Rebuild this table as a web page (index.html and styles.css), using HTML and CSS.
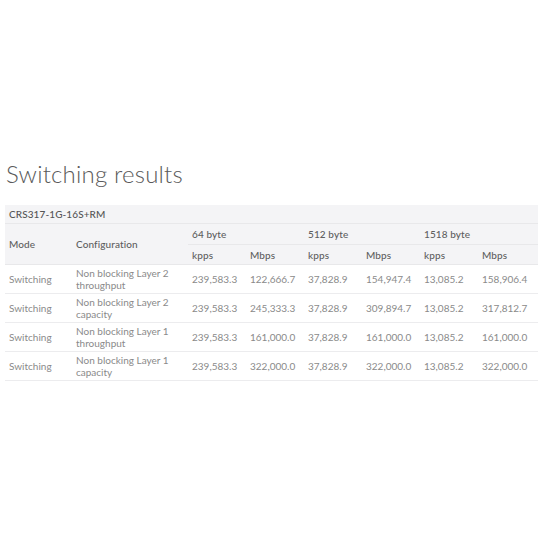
FILE: index.html
```html
<!DOCTYPE html>
<html>
<head>
<meta charset="utf-8">
<link rel="stylesheet" href="styles.css">
</head>
<body>
<div class="page">
  <h2 class="title">Switching results</h2>
  <table class="results">
    <colgroup>
      <col class="c-mode"><col class="c-conf">
      <col class="c-num"><col class="c-num"><col class="c-num"><col class="c-num"><col class="c-num"><col class="c-last">
    </colgroup>
    <thead>
      <tr class="model"><th colspan="8">CRS317-1G-16S+RM</th></tr>
      <tr class="h1">
        <th rowspan="2" class="tall">Mode</th>
        <th rowspan="2" class="tall">Configuration</th>
        <th colspan="2">64 byte</th>
        <th colspan="2">512 byte</th>
        <th colspan="2">1518 byte</th>
      </tr>
      <tr class="h2">
        <th>kpps</th><th>Mbps</th><th>kpps</th><th>Mbps</th><th>kpps</th><th>Mbps</th>
      </tr>
    </thead>
    <tbody>
      <tr><td>Switching</td><td>Non blocking Layer 2 throughput</td><td>239,583.3</td><td>122,666.7</td><td>37,828.9</td><td>154,947.4</td><td>13,085.2</td><td>158,906.4</td></tr>
      <tr><td>Switching</td><td>Non blocking Layer 2 capacity</td><td>239,583.3</td><td>245,333.3</td><td>37,828.9</td><td>309,894.7</td><td>13,085.2</td><td>317,812.7</td></tr>
      <tr><td>Switching</td><td>Non blocking Layer 1 throughput</td><td>239,583.3</td><td>161,000.0</td><td>37,828.9</td><td>161,000.0</td><td>13,085.2</td><td>161,000.0</td></tr>
      <tr><td>Switching</td><td>Non blocking Layer 1 capacity</td><td>239,583.3</td><td>322,000.0</td><td>37,828.9</td><td>322,000.0</td><td>13,085.2</td><td>322,000.0</td></tr>
    </tbody>
  </table>
</div>
</body>
</html>
```
FILE: styles.css
```css
html, body {
  margin: 0;
  padding: 0;
  background: #ffffff;
}
body {
  font-family: Lato, "Open Sans", sans-serif;
}
.page {
  padding: 157px 2px 0 5px;
}
.title {
  margin: 0 0 14px 1px;
  font-size: 24px;
  font-weight: 300;
  color: #5a5a5a;
  line-height: 34px;
  letter-spacing: 0.2px;
}
.results {
  border-collapse: collapse;
  width: 533px;
  table-layout: fixed;
  font-size: 10px;
}
.c-mode { width: 67px; }
.c-conf { width: 116px; }
.c-num { width: 58px; }
.c-last { width: 60px; }
.results th {
  background: #f4f4f6;
  color: #5e5e5e;
  font-weight: 500;
  text-align: left;
  padding: 0 4px;
  border-bottom: 1px solid #e8e8ea;
  height: 19px;
  letter-spacing: 0.1px;
}
.results .model th {
  height: 18px;
  color: #555;
}
.results .h1 th { height: 20px; }
.results .h2 th { height: 19px; }
.results td {
  color: #8a8a8a;
  padding: 0 4px;
  height: 28px;
  line-height: 12px;
  border-bottom: 1px solid #ececee;
  vertical-align: middle;
}
```
